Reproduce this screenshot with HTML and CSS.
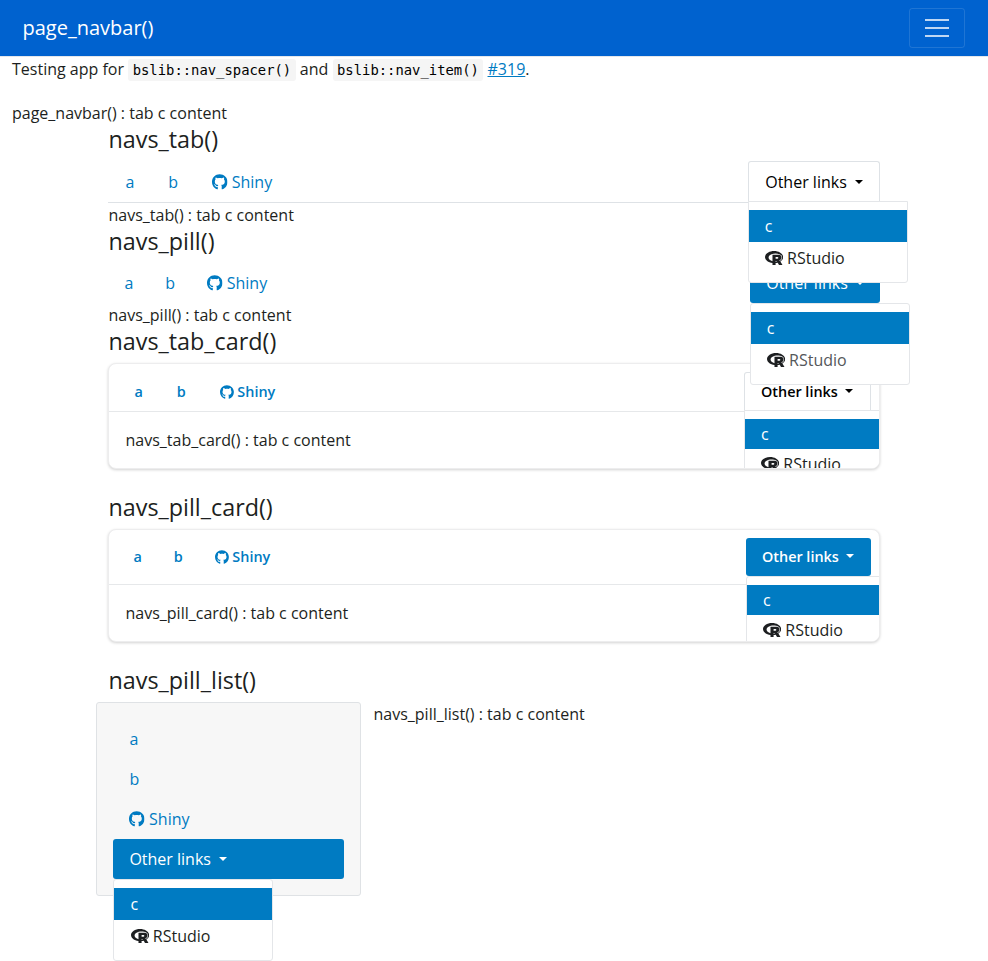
FILE: index.html
```html
<!DOCTYPE html>
<html lang="en">
<head>
<meta charset="utf-8">
<title>page_navbar()</title>
<link rel="stylesheet" href="styles.css">
</head>
<body>
<svg class="defs" aria-hidden="true">
  <symbol id="github" viewBox="0 0 496 512"><path d="M244.800 8C106.100 8 0 113.300 0 252c0 110.900 69.800 205.800 169.500 239.200 12.800 2.300 17.300-5.600 17.300-12.100 0-6.200-.3-40.400-.3-61.400 0 0-70 15-84.700-29.800 0 0-11.400-29.100-27.800-36.600 0 0-22.900-15.700 1.600-15.400 0 0 24.900 2 38.600 25.800 21.900 38.600 58.600 27.500 72.900 20.900 2.300-16 8.800-27.100 16-33.700-55.900-6.200-112.300-14.300-112.300-110.500 0-27.500 7.600-41.300 23.600-58.900-2.600-6.500-11.100-33.300 2.600-67.900 20.900-6.500 69 27 69 27 20-5.600 41.500-8.500 62.800-8.500s42.800 2.900 62.800 8.500c0 0 48.100-33.600 69-27 13.700 34.700 5.200 61.400 2.600 67.900 16 17.700 25.800 31.500 25.800 58.900 0 96.500-58.900 104.200-114.800 110.500 9.200 7.900 17 22.900 17 46.400 0 33.700-.3 75.400-.3 83.600 0 6.500 4.600 14.400 17.300 12.100C428.200 457.800 496 362.900 496 252 496 113.300 383.500 8 244.800 8z"/></symbol>
  <symbol id="rproject" viewBox="0 0 581 512"><path d="M581 226.600C581 119.100 450.900 32 290.500 32S0 119.100 0 226.600C0 322.400 103.300 402 239.400 418.100V480h99.100v-61.500c24.300-2.700 47.600-7.400 69.400-13.900L448 480h112l-67.400-113.700c54.500-35.400 88.400-84.900 88.400-139.700zm-466.800 14.500c0-73.500 98.900-133 220.800-133s211.900 40.700 211.900 133c0 50.100-26.500 85-70.300 106.400-2.400-1.600-4.700-2.900-6.400-3.700-10.200-5.200-27.800-10.500-27.800-10.500s86.600-6.400 86.600-92.700-90.600-87.900-90.600-87.900h-199V361c-74.100-21.500-125.200-67.100-125.200-119.900zm225.100 38.300v-55.600c57.800 0 87.800-6.800 87.800 27.300 0 36.500-38.200 28.300-87.800 28.300zm-.9 72.500H365c10.800 0 18.900 11.700 24 19.200-16.100 1.900-33 2.800-50.600 2.900v-22.100z"/></symbol>
</svg>

<header class="navbar">
  <a class="brand">page_navbar()</a>
  <button class="toggler" aria-label="Toggle navigation"><span></span><span></span><span></span></button>
</header>

<div class="page">
  <p class="intro">Testing app for <code>bslib::nav_spacer()</code> and <code>bslib::nav_item()</code> <a class="issue">#319</a>.</p>
  <div class="content">page_navbar() : tab c content</div>
</div>

<main class="main">
  <h4>navs_tab()</h4>
  <ul class="nav tabs">
    <li><a class="link">a</a></li>
    <li><a class="link">b</a></li>
    <li><a class="link"><svg class="gh"><use href="#github"/></svg> Shiny</a></li>
    <li class="dropdown"><a class="link active">Other links <i class="caret"></i></a>
      <div class="menu"><a class="item on">c</a><a class="item"><svg class="rp"><use href="#rproject"/></svg> RStudio</a></div>
    </li>
  </ul>
  <div class="content">navs_tab() : tab c content</div>

  <h4>navs_pill()</h4>
  <ul class="nav pills">
    <li><a class="link">a</a></li>
    <li><a class="link">b</a></li>
    <li><a class="link"><svg class="gh"><use href="#github"/></svg> Shiny</a></li>
    <li class="dropdown"><a class="link active">Other links <i class="caret"></i></a>
      <div class="menu"><a class="item on">c</a><a class="item fading"><svg class="rp"><use href="#rproject"/></svg> <span>RStudio</span></a></div>
    </li>
  </ul>
  <div class="content">navs_pill() : tab c content</div>

  <h4>navs_tab_card()</h4>
  <section class="card">
    <div class="card-header tab-header">
      <ul class="nav tabs">
        <li><a class="link">a</a></li>
        <li><a class="link">b</a></li>
        <li><a class="link"><svg class="gh"><use href="#github"/></svg> Shiny</a></li>
        <li class="dropdown"><a class="link active">Other links <i class="caret"></i></a>
          <div class="menu"><a class="item on">c</a><a class="item"><svg class="rp"><use href="#rproject"/></svg> RStudio</a></div>
        </li>
      </ul>
    </div>
    <div class="card-body">navs_tab_card() : tab c content</div>
  </section>

  <h4>navs_pill_card()</h4>
  <section class="card">
    <div class="card-header pill-header">
      <ul class="nav pills">
        <li><a class="link">a</a></li>
        <li><a class="link">b</a></li>
        <li><a class="link"><svg class="gh"><use href="#github"/></svg> Shiny</a></li>
        <li class="dropdown"><a class="link active">Other links <i class="caret"></i></a>
          <div class="menu"><a class="item on">c</a><a class="item"><svg class="rp"><use href="#rproject"/></svg> RStudio</a></div>
        </li>
      </ul>
    </div>
    <div class="card-body">navs_pill_card() : tab c content</div>
  </section>

  <h4>navs_pill_list()</h4>
  <div class="list-row">
    <div class="well">
      <ul class="nav pills stacked">
        <li><a class="link">a</a></li>
        <li><a class="link">b</a></li>
        <li><a class="link"><svg class="gh"><use href="#github"/></svg> Shiny</a></li>
        <li class="dropdown"><a class="link active">Other links <i class="caret"></i></a>
          <div class="menu"><a class="item on">c</a><a class="item"><svg class="rp"><use href="#rproject"/></svg> RStudio</a></div>
        </li>
      </ul>
    </div>
    <div class="content">navs_pill_list() : tab c content</div>
  </div>
</main>
</body>
</html>
```
FILE: styles.css
```css
* { box-sizing: border-box; }
html { overflow: hidden; }
body {
  margin: 0;
  height: 961px;
  background: #fff;
  color: #1d1f21;
  font: 16px/24px "Open Sans", sans-serif;
}
.defs { display: none; }

.navbar {
  display: flex;
  align-items: center;
  justify-content: space-between;
  height: 57px;
  padding: 0 23px 0 22.5px;
  background: #0062cf;
  border-bottom: 1px solid #e3e7ec;
}
.brand { color: #fff; font-size: 20px; line-height: 30px; }
.toggler {
  display: flex;
  flex-direction: column;
  align-items: center;
  justify-content: center;
  gap: 6px;
  width: 56px;
  height: 40px;
  padding: 0;
  background: none;
  border: 1px solid rgba(255, 255, 255, .12);
  border-radius: 3px;
}
.toggler span { width: 24px; height: 2px; background: rgba(255, 255, 255, .75); }

.page { padding: 0 12px; }
.intro { margin: 0 0 20px; height: 24px; }
code {
  padding: 3px 4.5px;
  border-radius: 3px;
  background: #f5f5f5;
  color: #000;
  font: 13.86px/20px "DejaVu Sans Mono", monospace;
}
.issue { color: #007bc2; text-decoration: underline; }

.main { width: 772px; margin: 0 auto; }
.main .content { padding-left: .5px; }
h4 { margin: 0 0 8px; padding-left: .5px; font-size: 23.35px; font-weight: 400; line-height: 28px; }

.nav { display: flex; margin: 0; padding: 0; list-style: none; }
.link { display: block; padding: 8px 15.6px 8px 16.4px; color: #007bc2; white-space: nowrap; }
.gh { width: 15.5px; height: 16px; fill: currentColor; vertical-align: -2px; }
.rp { width: 18.16px; height: 16px; fill: currentColor; vertical-align: -2px; }
.dropdown { position: relative; margin-left: auto; }
.tabs .active, .pills .active { padding-left: 16px; padding-right: 16px; }
.caret {
  display: inline-block;
  margin-left: .255em;
  vertical-align: .255em;
  border-top: .3em solid;
  border-left: .3em solid transparent;
  border-right: .3em solid transparent;
}

.tabs { height: 42px; border-bottom: 1px solid #dee2e6; }
.tabs .link { border: 1px solid transparent; border-bottom: 0; }
.tabs .active {
  height: 42px;
  background: #fff;
  border-color: #dee2e6;
  border-radius: 3px 3px 0 0;
  color: #000;
}
.pills .active { background: #007bc2; border-radius: 3px; color: #fff; }

.menu {
  position: absolute;
  z-index: 10;
  top: 100%;
  left: 0;
  width: 160px;
  padding: 8px 0;
  background: #fff;
  border: 1px solid #e4e6e9;
  border-radius: 3px;
}
.tabs .menu { top: 40px; border-radius: 0 0 3px 3px; }
.item { display: block; height: 32px; padding: 4px 15.6px; white-space: nowrap; }
.on { background: #007bc2; color: #fff; }
.fading span { color: #55575a; }

.card {
  margin: 0 0 24px;
  overflow: hidden;
  background: #fff;
  border: 1px solid #ededee;
  border-radius: 8px;
  box-shadow: 0 1px 3px rgba(0, 0, 0, .18);
}
.card-header {
  padding: 8px 8px 0;
  border-bottom: 1px solid #e6e8ea;
  font-size: 14.4px;
  font-weight: 600;
  line-height: 22px;
}
.tab-header { height: 48px; }
.tab-header .tabs { height: 39px; border-bottom: 0; }
.tab-header .active { height: 40px; }
.pill-header { height: 55px; }
.card .active { padding-right: 16.8px; }
.card .gh { width: 13.95px; height: 14.4px; }
.card .menu { font-size: 16px; font-weight: 400; }
.tab-header .menu { top: 38px; }
.card .item { height: 30px; padding: 4px 16px; }
.card-body { padding: 16px 16.5px; }

.list-row { display: flex; margin-left: -12px; }
.well {
  width: 265px;
  padding: 16px;
  background: #f7f7f7;
  border: 1px solid #dfe2e5;
  border-radius: 3px;
}
.stacked { flex-direction: column; }
.stacked .dropdown { margin-left: 0; }
.stacked .active { padding-left: 16.4px; }
.stacked .item { padding-left: 16.5px; }
.list-row .content { padding-left: 12.5px; }
```
